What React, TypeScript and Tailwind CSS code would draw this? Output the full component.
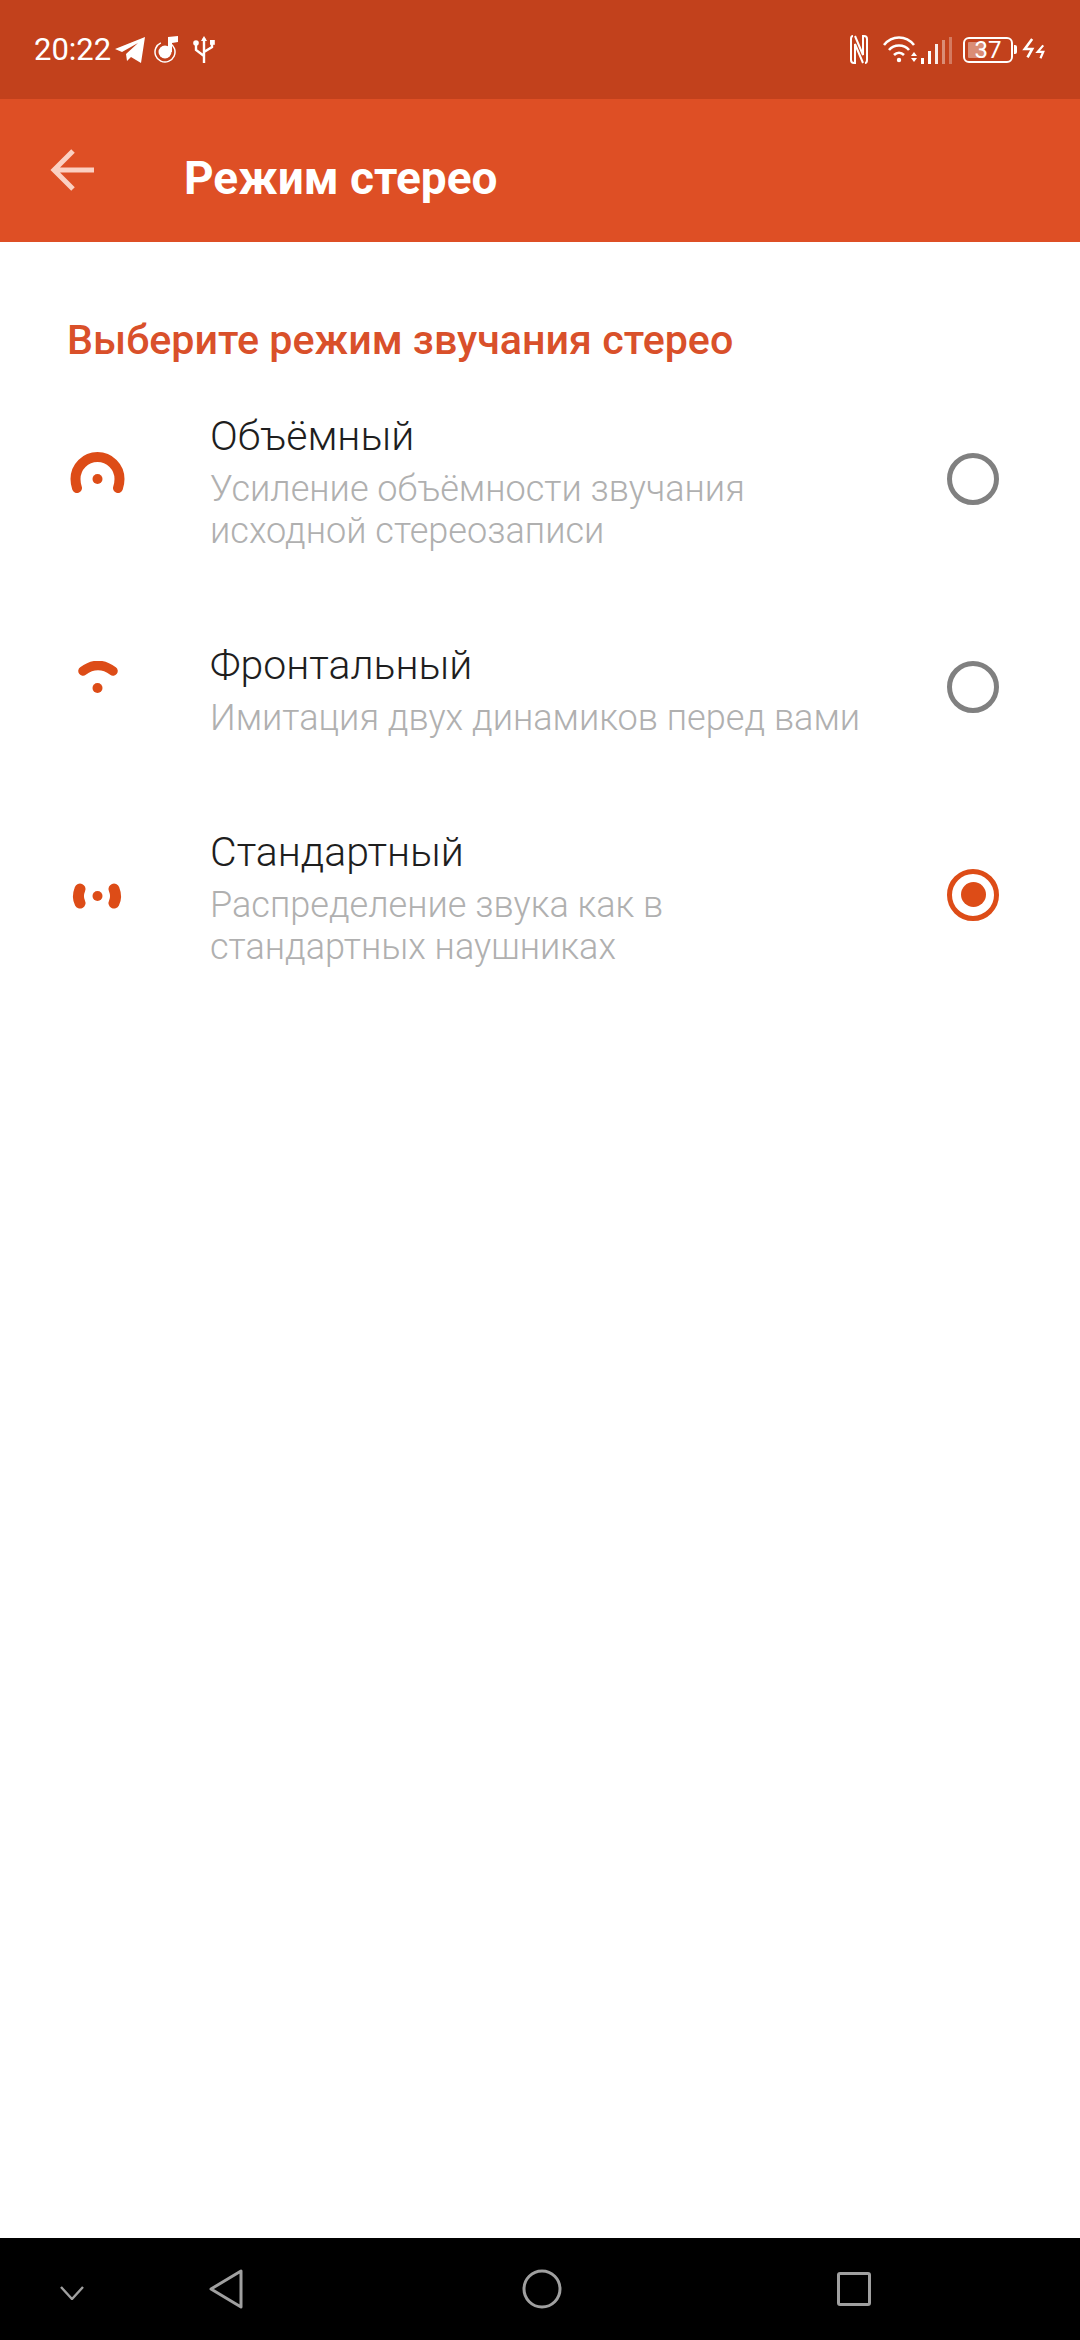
function StatusLeft() {
  return (
    <div className="flex items-center">
      <span className="text-[31px] leading-none text-white ml-[34px] w-[81px]">20:22</span>
      <svg width="30" height="26" viewBox="0 0 30 26" className="mr-[9px]">
        <path d="M0 12 L30 0 L26 26 L16 20 L12 24 L11 17 L23 6 L7 15 Z" fill="white" />
      </svg>
      <svg width="25" height="28" viewBox="0 0 25 28" className="mr-[14px]">
        <circle cx="11" cy="16" r="10" fill="none" stroke="white" strokeWidth="1.5" strokeDasharray="46 10" transform="rotate(-20 11 16)" />
        <circle cx="11" cy="16" r="6.5" fill="white" />
        <path d="M14 16 V1 L24 0 V6 L18 7 V16 Z" fill="white" />
      </svg>
      <svg width="22" height="28" viewBox="0 0 22 28" fill="none" stroke="white" strokeWidth="2.4">
        <path d="M11 2 V27 M11 20 L3 14 V9 M11 16 L19 11 V8" />
        <path d="M11 0 L14 5 H8 Z" fill="white" stroke="none" />
        <circle cx="3" cy="7" r="2.8" fill="white" stroke="none" />
        <rect x="17" y="4" width="4.8" height="4.8" fill="white" stroke="none" />
      </svg>
    </div>
  );
}

function StatusRight() {
  return (
    <div className="flex items-center mr-[34px]">
      <svg width="18" height="29" viewBox="0 0 18 29" fill="none" stroke="white" strokeWidth="2" className="mr-[15px]">
        <path d="M3 1 Q1 1 1 4 V25 Q1 28 4 28 L5 28 V9 L13 28" />
        <path d="M15 28 Q17 28 17 25 V4 Q17 1 14 1 H13 V20 L5 1" />
      </svg>
      <svg width="36" height="27" viewBox="0 0 36 27" fill="none" stroke="white" strokeWidth="2.6" className="mr-[2px]">
        <path d="M1 9 C9 -1 23 -1 31 9" />
        <path d="M6 14 C11 8 21 8 26 14" />
        <path d="M11 19 C14 16 18 16 21 19" />
        <circle cx="16" cy="24" r="2.2" fill="white" stroke="none" />
        <path d="M28 20 L31 16 L34 20 Z M28 22 L31 26 L34 22 Z" fill="white" stroke="none" />
      </svg>
      <div className="flex items-end gap-[4px] h-[29px] mr-[11px]">
        <div className="w-[3px] h-[6px] bg-white" />
        <div className="w-[3px] h-[13px] bg-white" />
        <div className="w-[3px] h-[20px] bg-white/90" />
        <div className="w-[3px] h-[24px] bg-white/40" />
        <div className="w-[3px] h-[27px] bg-white/30" />
      </div>
      <div className="relative w-[50px] h-[26px] rounded-[6px] border-[2px] border-white flex items-center justify-center mr-[1px]">
        <div className="absolute left-[3px] top-[3px] bottom-[3px] w-[17px] bg-white/40 rounded-[1px]" />
        <span className="relative text-[24px] leading-none text-white">37</span>
      </div>
      <div className="w-[3px] h-[9px] bg-white rounded-r-[2px] mr-[5px]" />
      <svg width="24" height="26" viewBox="0 0 26 26" fill="none" stroke="white" strokeWidth="2.8">
        <path d="M11 1 L3 12 H11 L6 21" />
        <path d="M23 8 L17 15 H23 L20 22" strokeWidth="2.4" />
      </svg>
    </div>
  );
}

function SurroundIcon() {
  return (
    <svg width="56" height="42" viewBox="0 0 56 42" className="mb-[12px]">
      <path d="M8 36 C7 33 6.5 30 6.5 27 A22 22 0 0 1 50.5 27 C50.5 30 50 33 49 36" fill="none" stroke="#dd4c17" strokeWidth="10" strokeLinecap="round" />
      <circle cx="28.5" cy="27" r="5" fill="#dd4c17" />
    </svg>
  );
}

function FrontIcon() {
  return (
    <svg width="56" height="42" viewBox="0 0 56 42" className="mb-[10px]">
      <path d="M14 10 Q29 -1 44 10" fill="none" stroke="#dd4c17" strokeWidth="9.5" strokeLinecap="round" />
      <circle cx="28.5" cy="27" r="5" fill="#dd4c17" />
    </svg>
  );
}

function StandardIcon() {
  return (
    <svg width="56" height="42" viewBox="0 0 56 42">
      <path d="M11 15 C9 20 9 25 11 29" fill="none" stroke="#dd4c17" strokeWidth="11" strokeLinecap="round" />
      <path d="M45 15 C47 20 47 25 45 29" fill="none" stroke="#dd4c17" strokeWidth="11" strokeLinecap="round" />
      <circle cx="28.5" cy="22" r="5" fill="#dd4c17" />
    </svg>
  );
}

function Radio({ checked }: { checked?: boolean }) {
  return (
    <div
      className={
        checked
          ? "w-[52px] h-[52px] rounded-full border-[5px] border-[#dd4c17] flex items-center justify-center"
          : "w-[52px] h-[52px] rounded-full border-[5px] border-[#808080]"
      }
    >
      {checked && <div className="w-[25px] h-[25px] rounded-full bg-[#dd4c17]" />}
    </div>
  );
}

const modes = [
  { title: "Объёмный", lines: ["Усиление объёмности звучания", "исходной стереозаписи"], icon: <SurroundIcon /> },
  { title: "Фронтальный", lines: ["Имитация двух динамиков перед вами"], icon: <FrontIcon /> },
  { title: "Стандартный", lines: ["Распределение звука как в", "стандартных наушниках"], icon: <StandardIcon />, checked: true },
];

export default function App() {
  return (
    <div className="w-[1080px] h-[2340px] flex flex-col bg-white font-['Roboto',sans-serif]">
      <div className="h-[99px] bg-[#c2411c] flex items-center justify-between shrink-0">
        <StatusLeft />
        <StatusRight />
      </div>
      <div className="h-[143px] bg-[#de4f25] flex items-center shrink-0">
        <svg width="44" height="44" viewBox="0 0 44 44" fill="none" stroke="#fbd0c2" strokeWidth="5" className="ml-[50px]">
          <path d="M44 21 H5 M23 2 L4 21 L23 40" />
        </svg>
        <h1 className="ml-[90px] text-[46px] font-bold text-white leading-none mt-[15px]">Режим стерео</h1>
      </div>
      <main className="flex-1">
        <h2 className="mt-[73px] ml-[67px] text-[41.2px] leading-[50px] font-medium text-[#d9502a]">
          Выберите режим звучания стерео
        </h2>
        <div className="mt-[46px] flex flex-col gap-[88px]">
          {modes.map((m) => (
            <div key={m.title} className="flex items-center">
              <div className="w-[210px] pl-[69px] mb-[5px] shrink-0">{m.icon}</div>
              <div className="flex-1">
                <div className="text-[41px] font-light leading-[50px] text-[#1e1e1e]">{m.title}</div>
                <div className="mt-[7px] text-[36.1px] font-light leading-[42px] text-[#b0b0b0]">
                  {m.lines.map((l) => (
                    <div key={l}>{l}</div>
                  ))}
                </div>
              </div>
              <div className="mr-[81px] mb-[6px]">
                <Radio checked={m.checked} />
              </div>
            </div>
          ))}
        </div>
      </main>
      <div className="h-[102px] bg-black flex items-center shrink-0">
        <svg width="24" height="14" viewBox="0 0 24 14" fill="none" stroke="#a0a0a0" strokeWidth="2.4" className="ml-[60px] mt-[8px]">
          <path d="M1 1 L12 13 L23 1" />
        </svg>
        <svg width="34" height="40" viewBox="0 0 34 40" fill="none" stroke="#a0a0a0" strokeWidth="3" strokeLinejoin="round" className="ml-[125px]">
          <path d="M32 2 V38 L2 20 Z" />
        </svg>
        <svg width="40" height="40" viewBox="0 0 40 40" fill="none" stroke="#a0a0a0" strokeWidth="3" className="ml-[279px]">
          <circle cx="20" cy="20" r="18" />
        </svg>
        <div className="w-[34px] h-[34px] rounded-[3px] border-[3px] border-[#a0a0a0] ml-[275px]" />
      </div>
    </div>
  );
}
